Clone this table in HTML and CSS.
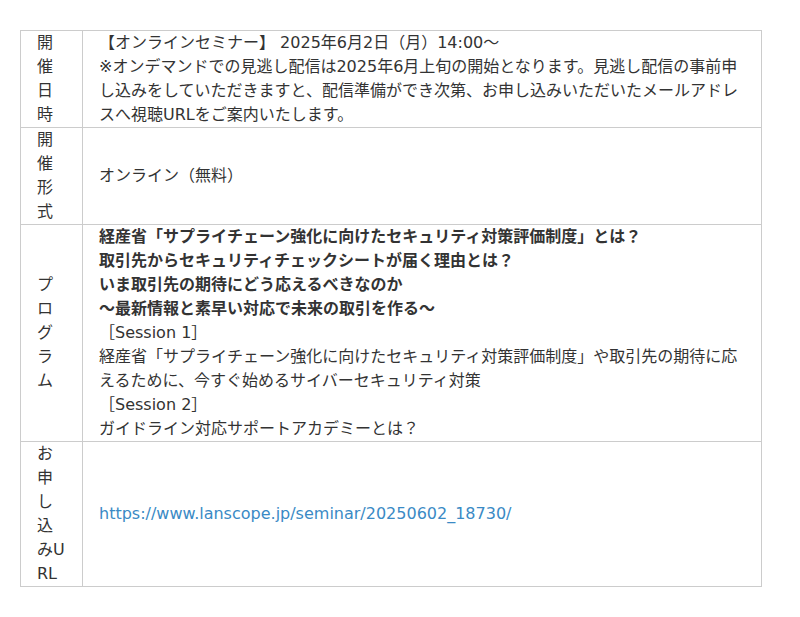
FILE: index.html
```html
<!DOCTYPE html>
<html lang="ja">
<head>
    <meta charset="UTF-8">
    <meta name="viewport" content="width=device-width, initial-scale=1.0">
    <title>セミナー概要</title>
    <link rel="stylesheet" href="styles.css">
</head>
<body>

<div class="container">
    <table class="info-table">
        <tr>
            <th>開催日時</th>
            <td>【オンラインセミナー】 2025年6月2日（月）14:00～<br>※オンデマンドでの見逃し配信は2025年6月上旬の開始となります。見逃し配信の事前申し込みをしていただきますと、配信準備ができ次第、お申し込みいただいたメールアドレスへ視聴URLをご案内いたします。</td>
        </tr>
        <tr>
            <th>開催形式</th>
            <td>オンライン（無料）</td>
        </tr>
        <tr>
            <th>プログラム</th>
            <td><strong>経産省「サプライチェーン強化に向けたセキュリティ対策評価制度」とは？<br>取引先からセキュリティチェックシートが届く理由とは？<br>いま取引先の期待にどう応えるべきなのか<br>～最新情報と素早い対応で未来の取引を作る～</strong><br>［Session 1］<br>経産省「サプライチェーン強化に向けたセキュリティ対策評価制度」や取引先の期待に応えるために、今すぐ始めるサイバーセキュリティ対策<br>［Session 2］<br>ガイドライン対応サポートアカデミーとは？</td>
        </tr>
        <tr>
            <th>お申し込みURL</th>
            <td><a href="https://www.lanscope.jp/seminar/20250602_18730/">https://www.lanscope.jp/seminar/20250602_18730/</a></td>
        </tr>
    </table>
</div>

</body>
</html>
```

FILE: styles.css
```css
/* Global Styles */
body {
    font-family: "DejaVu Sans", "Noto Sans CJK JP", sans-serif;
    margin: 0;
    padding: 30px 20px;
    color: #333;
    background: #fff;
}

/* Table */
.info-table {
    width: 742px;
    border-collapse: collapse;
    font-size: 16px;
    line-height: 24px;
}

.info-table th,
.info-table td {
    border: 1px solid #ccc;
    padding: 0 16px;
    vertical-align: middle;
    text-align: left;
    font-weight: normal;
}

.info-table th {
    width: 29px;
    word-break: break-all;
}

.info-table strong {
    font-weight: bold;
}

.info-table a {
    color: #3a8ac5;
    text-decoration: none;
}
```
